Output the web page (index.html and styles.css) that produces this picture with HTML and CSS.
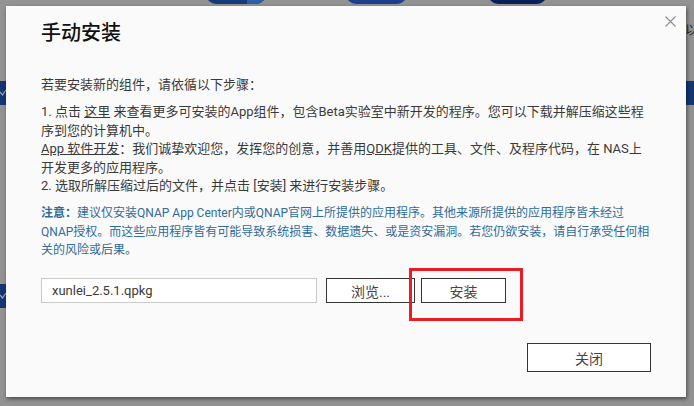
FILE: index.html
```html
<!DOCTYPE html>
<html lang="zh">
<head>
<meta charset="UTF-8" />
<title>手动安装</title>
<link rel="stylesheet" href="styles.css">
</head>
<body>

<div class="desk">
  <span class="tile t1"><i></i></span>
  <span class="tile t2"></span>
  <span class="tile t3"></span>
  <span class="band b1"><svg width="6" height="6" viewBox="0 0 6 6"><polyline points="0,2 2.5,5 6,0" fill="none" stroke="#9aa4b8" stroke-width="1.2"/></svg></span>
  <span class="band b2"><svg width="6" height="6" viewBox="0 0 6 6"><polyline points="0,2 2.5,5 6,0" fill="none" stroke="#9aa4b8" stroke-width="1.2"/></svg></span>
  <span class="band b3"></span>
  <span class="peek">以</span>
</div>

<div class="dialog">
  <button class="x-close" title="关闭">
    <svg width="11" height="11" viewBox="0 0 11 11"><path d="M0.5 0.5L10.5 10.5M10.5 0.5L0.5 10.5" stroke="#8c8c8c" stroke-width="1.1"/></svg>
  </button>
  <h1 class="title">手动安装</h1>

  <div class="content">
    <p>若要安装新的组件，请依循以下步骤：</p>
    <p>1. 点击 <a href="#">这里</a> 来查看更多可安装的App组件，包含Beta实验室中新开发的程序。您可以下载并解压缩这些程序到您的计算机中。<br><a href="#">App 软件开发</a>：我们诚挚欢迎您，发挥您的创意，并善用<a href="#">QDK</a>提供的工具、文件、及程序代码，在 NAS上开发更多的应用程序。<br>2. 选取所解压缩过后的文件，并点击 [安装] 来进行安装步骤。</p>
    <p class="notice"><b>注意：</b>建议仅安装QNAP App Center内或QNAP官网上所提供的应用程序。其他来源所提供的应用程序皆未经过QNAP授权。而这些应用程序皆有可能导致系统损害、数据遗失、或是资安漏洞。若您仍欲安装，请自行承受任何相关的风险或后果。</p>

    <div class="upload">
      <input class="file" type="text" value="xunlei_2.5.1.qpkg" readonly>
      <button class="btn browse">浏览...</button>
      <span class="mark"><button class="btn install">安装</button></span>
    </div>
  </div>

  <div class="footer">
    <button class="btn close">关闭</button>
  </div>
</div>

</body>
</html>
```

FILE: styles.css
```css
html, body {
  margin: 0;
  padding: 0;
}
body {
  font-family: Roboto, "Noto Sans CJK SC", sans-serif;
  background: #939393;
  width: 694px;
  height: 406px;
  overflow: hidden;
  position: relative;
  padding: 6px 0 0 6px;
  box-sizing: border-box;
}

/* desktop behind the modal */
.desk .tile {
  position: absolute;
  top: -20px;
  height: 24px;
  border-radius: 0 0 12px 12px;
  overflow: hidden;
}
.t1 { left: 205px; width: 62px; background: #123c7c; }
.t1 i {
  position: absolute;
  right: 0; top: 0;
  width: 20px; height: 100%;
  background: #2d5ea6;
}
.t2 { left: 345px; width: 63px; background: #1c3f8e; }
.t3 { left: 487px; width: 61px; background: #0b1f5b; }
.desk .band {
  position: absolute;
  height: 24px;
  background: #163673;
  display: flex;
  align-items: center;
}
.b1 { left: 0; top: 81px; width: 6px; }
.b2 { left: 0; top: 284px; width: 6px; }
.b3 { left: 686px; top: 81px; width: 8px; }
.peek {
  position: absolute;
  left: 685px;
  top: 19px;
  font-size: 13px;
  color: #2a2a2a;
}

/* dialog */
.dialog {
  position: relative;
  width: 680px;
  height: 391px;
  background: #fafafa;
  box-shadow: 1px 2px 4px rgba(0,0,0,0.5);
  padding: 13px 35px 0 35px;
  box-sizing: border-box;
  color: #3a3a3a;
}
.x-close {
  position: absolute;
  top: 10px;
  right: 10px;
  width: 11px;
  height: 11px;
  padding: 0;
  border: none;
  background: none;
  display: flex;
}
.title {
  margin: 0;
  font-size: 20px;
  line-height: 28px;
  font-weight: 500;
  color: #111;
}
.content {
  margin-top: 29px;
}
.content p {
  margin: 0 0 8.5px 0;
  font-size: 13px;
  line-height: 18.5px;
}
.content a {
  color: #3a3a3a;
  text-decoration: underline;
}
.content p.notice {
  font-size: 12px;
  color: #2f6b9c;
  margin-bottom: 0;
}
.notice b {
  font-weight: bold;
}

.upload {
  display: flex;
  align-items: center;
  margin-top: 18.5px;
}
.file {
  width: 276px;
  height: 25px;
  box-sizing: border-box;
  border: 1px solid #cacaca;
  background: #fff;
  padding: 0 10px;
  font-family: Roboto, "Noto Sans CJK SC", sans-serif;
  font-size: 13px;
  color: #3a3a3a;
  outline: none;
}
.btn {
  height: 25px;
  box-sizing: border-box;
  border: 1px solid #333;
  background: #fff;
  font-family: Roboto, "Noto Sans CJK SC", sans-serif;
  font-size: 14px;
  color: #444;
  padding: 0;
  cursor: pointer;
}
.browse {
  width: 89px;
  margin-left: 9px;
}
.mark {
  position: relative;
  margin-left: 6px;
  display: flex;
}
.install {
  width: 85px;
}
.mark::after {
  content: "";
  position: absolute;
  top: -10px;
  bottom: -18px;
  left: -12px;
  right: -17px;
  border: 3px solid #ec1c24;
  pointer-events: none;
}

.footer {
  display: flex;
  justify-content: flex-end;
  margin-top: 40px;
}
.close {
  width: 124px;
  height: 29px;
}
```
